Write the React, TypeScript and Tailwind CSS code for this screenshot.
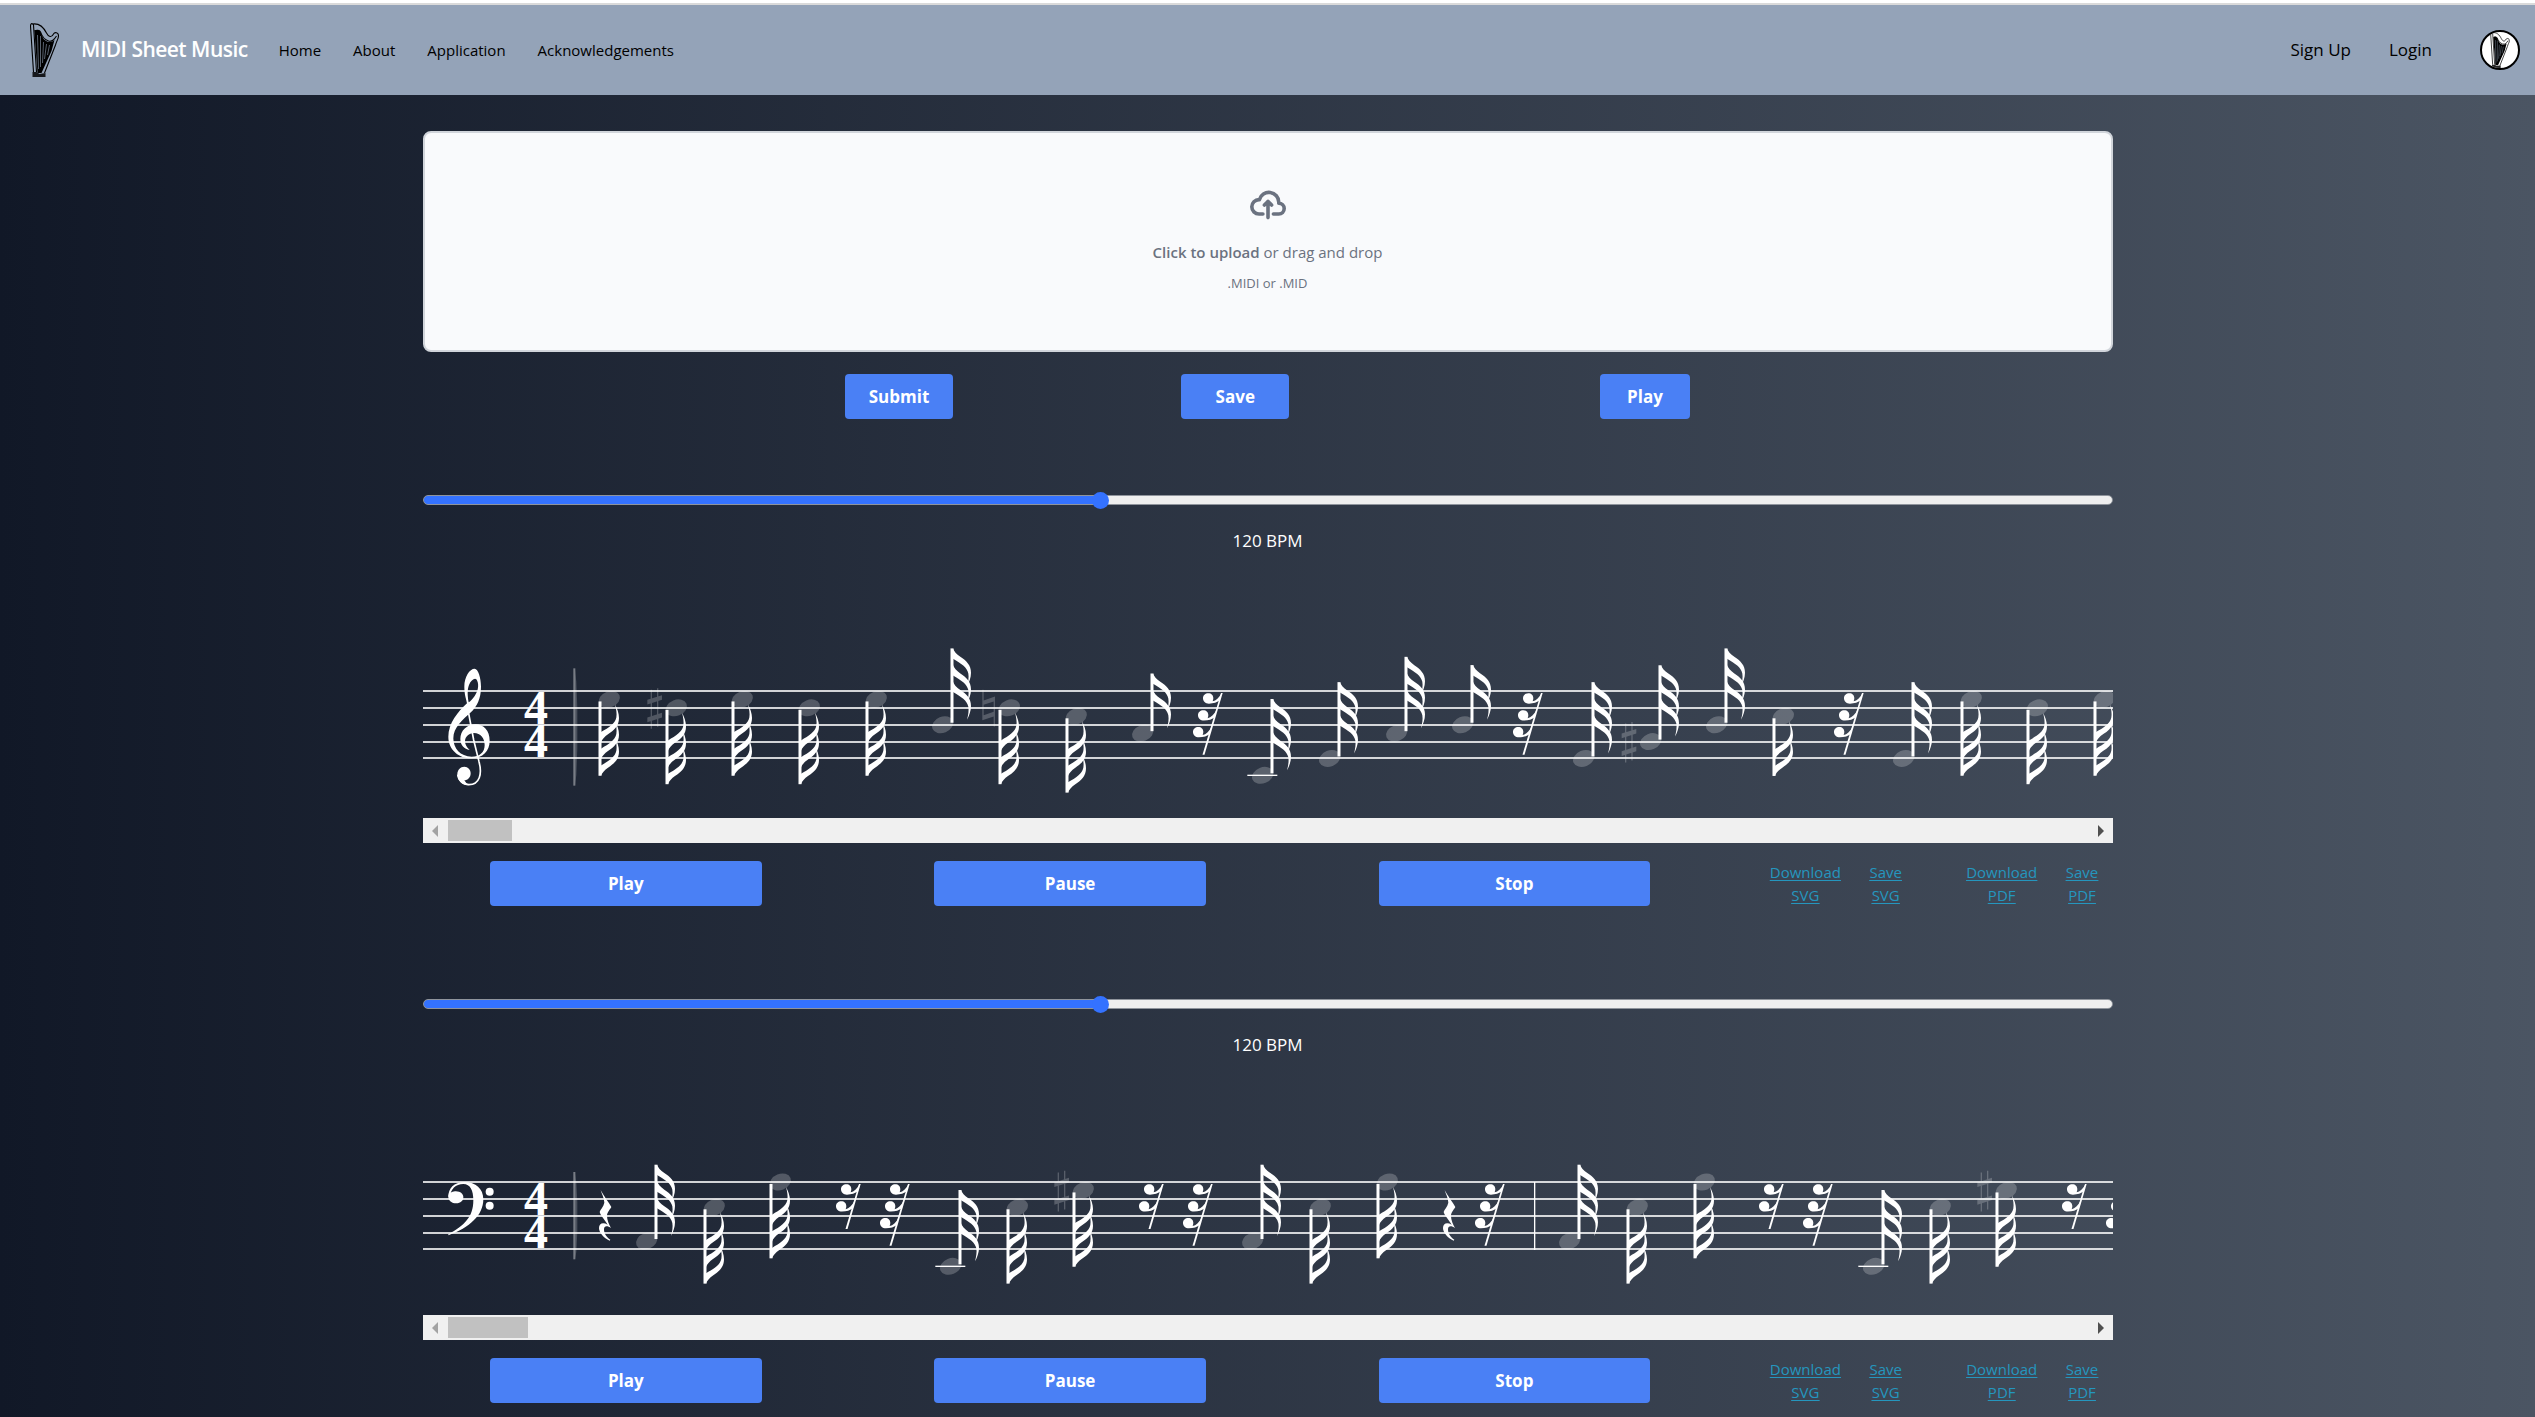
import { useState } from "react";

type Note = {
  kind: "up" | "down";
  x: number;
  pos: number;
  flags: number;
  accidental?: "sharp" | "natural";
  ledger?: boolean;
};
type Rest = { kind: "rest"; x: number; hooks: number };
type Quarter = { kind: "quarter"; x: number };
type Bar = { kind: "bar"; x: number };
type Mark = Note | Rest | Quarter | Bar;

const up = (x: number, pos: number, flags = 3, extra: Partial<Note> = {}): Note => ({ kind: "up", x, pos, flags, ...extra });
const down = (x: number, pos: number, flags = 3, extra: Partial<Note> = {}): Note => ({ kind: "down", x, pos, flags, ...extra });
const rest = (x: number, hooks = 3): Rest => ({ kind: "rest", x, hooks });

const TREBLE: Mark[] = [
  down(177, 1),
  down(244, 2, 3, { accidental: "sharp" }),
  down(310, 1),
  down(377, 2),
  down(444, 1),
  up(529, 4),
  down(577, 2, 3, { accidental: "natural" }),
  down(644, 3),
  up(729, 5, 2),
  rest(799),
  up(849, 10, 3, { ledger: true }),
  up(916, 8),
  up(983, 5),
  up(1049, 4, 2),
  rest(1119),
  up(1170, 8),
  up(1237, 6, 3, { accidental: "sharp" }),
  up(1303, 4),
  down(1351, 3, 2),
  rest(1440),
  up(1490, 8),
  down(1539, 1),
  down(1605, 2),
  down(1672, 1),
];

const BASS: Mark[] = [
  { kind: "quarter", x: 176 },
  up(233, 7),
  down(282, 3),
  down(348, 0),
  rest(437, 2),
  rest(486),
  up(537, 10, 3, { ledger: true }),
  down(585, 3),
  down(651, 1, 3, { accidental: "sharp" }),
  rest(740, 2),
  rest(789),
  up(839, 7),
  down(888, 3),
  down(955, 0),
  { kind: "quarter", x: 1020 },
  rest(1081),
  { kind: "bar", x: 1111 },
  up(1156, 7),
  down(1205, 3),
  down(1272, 0),
  rest(1360, 2),
  rest(1409),
  up(1460, 10, 3, { ledger: true }),
  down(1508, 3),
  down(1574, 1, 3, { accidental: "sharp" }),
  rest(1663, 2),
  rest(1712),
];

/* Glyphs are drawn on a grid of three units to the pixel. */
const HALF_SPACE = 25.3;

function Accidental({ type }: { type: "sharp" | "natural" }) {
  if (type === "sharp") {
    return (
      <g opacity="0.22">
        <path d="M-77 -54h4V63h-4ZM-58 -59h4V57h-4ZM-87 -24L-43 -38V-24L-87 -10ZM-87 29L-43 15V29L-87 43Z" />
      </g>
    );
  }
  return (
    <path
      opacity="0.22"
      d="M-81 -54h4V-22L-43 -34V56h-4V26L-81 37ZM-77 -9V22L-47 12V-19Z"
      fillRule="evenodd"
    />
  );
}

function NoteGlyph({ note }: { note: Note }) {
  const dir = note.kind === "up" ? -1 : 1;
  const length = 79 + note.flags * 50;
  const flags = Array.from({ length: note.flags }, (_, i) => length - i * 50);
  return (
    <g transform={`translate(${note.x * 3} ${note.pos * HALF_SPACE})`}>
      <ellipse cx={28 * dir} rx="33" ry="24" transform={`rotate(-22 ${28 * dir} 0)`} opacity="0.22" />
      {note.accidental && (
        <g transform={`translate(${28 * dir} 0)`}>
          <Accidental type={note.accidental} />
        </g>
      )}
      {note.ledger && <rect x="-74" y="-2" width="90" height="4" />}
      <g transform={`scale(1 ${dir})`}>
        <rect x="-4.5" y="6" width="9" height={length - 6} />
        {flags.map((y) => (
          <path
            key={y}
            transform={`translate(4 ${y})`}
            d="M-1 0C2 -8 9 -17 21 -25C39 -37 53 -50 53 -73C53 -88 47 -103 41 -114C45 -100 47 -86 45 -75C41 -56 24 -46 -1 -31Z"
          />
        ))}
      </g>
    </g>
  );
}

function RestGlyph({ x, hooks }: { x: number; hooks: number }) {
  const end = 35 + hooks * 50;
  return (
    <g transform={`translate(${x * 3} 6)`}>
      <path d={`M-3 0L2 0L${-0.3 * end + 3} ${end}L${-0.3 * end - 3} ${end}Z`} />
      {Array.from({ length: hooks }, (_, i) => (
        <path
          key={i}
          transform={`translate(${-15 * i} ${50.5 * i})`}
          d="M-57 16C-57 7 -50 1 -41 1C-32 1 -26 7 -26 16C-26 19 -27 22 -28 25C-18 23 -9 14 -1 0L-6 22C-14 28 -26 32 -39 32C-50 32 -57 25 -57 16Z"
        />
      ))}
    </g>
  );
}

function MarkGlyph({ mark }: { mark: Mark }) {
  if (mark.kind === "rest") return <RestGlyph x={mark.x} hooks={mark.hooks} />;
  if (mark.kind === "quarter") {
    return (
      <path
        transform={`translate(${mark.x * 3} 24)`}
        d="M5 0C14 18 30 38 37 51C34 58 24 66 24 78C24 90 30 104 36 114C26 107 15 106 15 118C15 130 22 142 34 149L32 152C14 144 0 128 0 114C0 100 12 96 26 104C18 90 4 76 2 66C4 58 14 50 16 38C16 24 8 12 5 0Z"
      />
    );
  }
  if (mark.kind === "bar") return <rect x={mark.x * 3} width="4" height="204" />;
  return <NoteGlyph note={mark} />;
}

function TrebleClef() {
  return (
    <g transform="translate(0 -153)">
      <path
        fillRule="evenodd"
        d="M155 86C140 86 124 110 124 140C124 165 130 178 132 190C105 215 76 250 76 290C76 330 108 355 145 355C180 355 200 332 200 302C200 272 182 253 158 253C132 253 112 272 112 297C112 315 124 328 140 330C130 322 126 312 126 304C126 290 138 279 153 279C173 279 185 295 185 315C185 337 170 350 146 350C112 350 91 325 91 295C91 262 118 240 142 218C162 200 174 175 174 140C174 112 165 86 155 86ZM137 187C134 170 132 150 138 135C144 120 155 113 160 118C168 128 168 150 155 168C148 178 142 184 137 187Z"
      />
      <path d="M137 220L152 300L168 365C178 402 170 434 138 434C118 434 106 420 104 404" fill="none" stroke="white" strokeWidth="5" />
      <path d="M103 403C103 390 112 380 124 380C135 380 143 389 143 400C143 413 134 421 124 421C128 428 133 433 138 436C116 436 103 420 103 403Z" />
    </g>
  );
}

function BassClef() {
  return (
    <g>
      <path d="M76 160C140 137 181 100 181 52C181 20 158 0 125 0C92 0 76 20 76 44L82 44C82 22 98 6 121 6C142 6 151 25 151 55C151 105 125 130 76 157Z" />
      <path d="M76 44C76 32 86 30 96 28C112 27 121 36 121 46C121 57 112 64 100 64C86 64 76 56 76 44Z" />
      <circle cx="200" cy="29" r="12" />
      <circle cx="200" cy="71" r="12" />
    </g>
  );
}

function Sheet({ clef, marks }: { clef: "treble" | "bass"; marks: Mark[] }) {
  const treble = clef === "treble";
  return (
    <svg
      role="img"
      aria-label={treble ? "Treble clef sheet music" : "Bass clef sheet music"}
      className={treble ? "block h-[264px] w-full fill-white" : "block h-[257px] w-full fill-white"}
    >
      <g transform={treble ? "translate(0 136)" : "translate(0 123)"}>
        {[0, 17, 34, 51, 67].map((y) => (
          <rect key={y} y={y} width="100%" height="2" opacity="0.8" />
        ))}
        <g className="text-[48px] font-bold [font-family:'Liberation_Serif',serif]">
          <text x="101" y="34">4</text>
          <text x="101" y="67">4</text>
        </g>
        <g transform="scale(0.33333) translate(0 3)">
          {treble ? <TrebleClef /> : <BassClef />}
          <g transform={treble ? "translate(451 -68)" : "translate(451 -30)"} opacity="0.4">
            <rect width="6" height={treble ? 352 : 262} />
            <path d={treble ? "M5 5L9 40L12 120V240L9 320L5 350Z" : "M5 4L9 30L12 90V180L9 240L5 260Z"} opacity="0.5" />
          </g>
          {marks.map((m) => (
            <MarkGlyph key={m.x} mark={m} />
          ))}
        </g>
      </g>
    </svg>
  );
}

function ScrollStrip({ thumb }: { thumb: string }) {
  return (
    <div className="flex h-[25px] items-center bg-[#f0f0f0]">
      <button type="button" aria-label="Scroll left" className="flex w-[25px] shrink-0 justify-center">
        <svg width="6" height="12" viewBox="0 0 6 12" className="fill-[#a3a3a3]">
          <path d="M6 0V12L0 6Z" />
        </svg>
      </button>
      <div className="flex-1">
        <div className={thumb} />
      </div>
      <button type="button" aria-label="Scroll right" className="flex w-6 shrink-0 justify-center">
        <svg width="6" height="12" viewBox="0 0 6 12" className="fill-[#505050]">
          <path d="M0 0V12L6 6Z" />
        </svg>
      </button>
    </div>
  );
}

function Harp({ className }: { className: string }) {
  return (
    <svg viewBox="0 0 30 54" className={className} aria-hidden="true">
      <path d="M5 9C5 7 9 6 11 9C13 15 15 18 19 19C22 19 24 18 25 17L22 28L12 50H8Z" fill="black" />
      <path d="M8 12L9 46M11 13V44M14 19L13 40M17 21L15 36M20 22L18 32" stroke="#94a3b8" strokeWidth="0.6" fill="none" />
      <path
        d="M4 49L1 3C1 0 3 0 4 2L7 49M3 1C10 0 14 4 17 10C19 14 22 15 24 11C25 9 29 9 29 13C29 16 27 18 26 22L15 50M27 13C25 16 23 19 19 18C15 17 12 12 11 9C10 7 7 7 5 8"
        fill="none"
        stroke="black"
        strokeWidth="1.1"
      />
      <path d="M3 49H7L10 51L16 50V54H3Z" fill="black" opacity="0.85" />
    </svg>
  );
}

function Tempo({ id }: { id: string }) {
  const [bpm, setBpm] = useState(120);
  const share = `${((bpm - 40) / 200) * 100}%`;
  return (
    <div className="flex flex-col items-center">
      <input
        id={id}
        type="range"
        min={40}
        max={240}
        value={bpm}
        onChange={(e) => setBpm(Number(e.target.value))}
        style={{ backgroundImage: `linear-gradient(to right, #3472ff ${share}, #efefef ${share})` }}
        className="h-2.5 w-full appearance-none rounded-full border border-[#8f949c] bg-origin-border [&::-webkit-slider-thumb]:size-[17px] [&::-webkit-slider-thumb]:appearance-none [&::-webkit-slider-thumb]:rounded-full [&::-webkit-slider-thumb]:bg-[#3472ff]"
      />
      <label htmlFor={id} className="mt-[22px] text-[17px] leading-[27px] text-white">
        {bpm} BPM
      </label>
    </div>
  );
}

const BUTTON = "h-[45px] rounded bg-[#4a80f5] text-[17px] font-bold text-white";

function Links({ format }: { format: string }) {
  return (
    <div className="flex w-[45%] justify-around text-center text-[15px] leading-[23px] text-[#2596be] underline underline-offset-2">
      <a href={`#download-${format}`}>
        Download
        <br />
        {format}
      </a>
      <a href={`#save-${format}`}>
        Save
        <br />
        {format}
      </a>
    </div>
  );
}

function Controls() {
  return (
    <div className="mt-[18px] flex justify-between pl-[4%]">
      <div className="flex w-[71.5%] justify-between">
        <button type="button" className={`w-[23.4%] ${BUTTON}`}>Play</button>
        <button type="button" className={`w-[23.4%] ${BUTTON}`}>Pause</button>
        <button type="button" className={`w-[23.4%] ${BUTTON}`}>Stop</button>
      </div>
      <div className="flex w-[22%] justify-between">
        <Links format="SVG" />
        <Links format="PDF" />
      </div>
    </div>
  );
}

export default function App() {
  return (
    <div className="min-h-screen border-t-[3px] border-white bg-[linear-gradient(to_right,#111827,#4b5563)] [font-family:'Open_Sans',sans-serif]">
      <header className="flex h-[92px] items-center border-t-2 border-[#dadada] bg-[#94a3b8] pr-[15px] pl-[29px]">
        <Harp className="h-[54px] w-[31px]" />
        <span className="ml-[21px] text-[21px] font-semibold tracking-tight text-white">MIDI Sheet Music</span>
        <nav className="ml-[31px] flex gap-8 text-[15px] text-black">
          <a href="#home">Home</a>
          <a href="#about">About</a>
          <a href="#application">Application</a>
          <a href="#acknowledgements">Acknowledgements</a>
        </nav>
        <div className="ml-auto flex items-center text-[17px] text-black">
          <a href="#signup">Sign Up</a>
          <a href="#login" className="ml-[38px]">Login</a>
          <button type="button" aria-label="Account" className="ml-12 flex size-10 items-center justify-center overflow-hidden rounded-full border-2 border-black bg-white">
            <Harp className="h-9 w-5" />
          </button>
        </div>
      </header>

      <main className="mx-auto mt-9 w-2/3 pb-3">
        <label
          htmlFor="midi-file"
          className="flex h-[221px] cursor-pointer flex-col items-center justify-center rounded-lg border-2 border-[#d1d5db] bg-[#f9fafc] pb-1 text-[#6b7280]"
        >
          <svg viewBox="0 0 20 16" fill="none" className="h-9 w-9" aria-hidden="true">
            <path
              stroke="currentColor"
              strokeLinecap="round"
              strokeLinejoin="round"
              strokeWidth="2"
              d="M13 13h3a3 3 0 0 0 0-6h-.025A5.56 5.56 0 0 0 16 6.5 5.5 5.5 0 0 0 5.207 5.021C5.137 5.017 5.071 5 5 5a4 4 0 0 0 0 8h2.167M10 15V6m0 0L8 8m2-2 2 2"
            />
          </svg>
          <span className="mt-[18px] text-[15px] leading-[23px]">
            <span className="font-semibold">Click to upload</span> or drag and drop
          </span>
          <span className="mt-2.5 text-[13px] leading-[18px]">.MIDI or .MID</span>
          <input id="midi-file" type="file" accept=".mid,.midi" className="sr-only" />
        </label>

        <div className="mx-auto mt-[22px] grid w-1/2 grid-cols-[39.8%_1fr_auto]">
          <button type="button" className={`w-[108px] ${BUTTON}`}>Submit</button>
          <button type="button" className={`w-[108px] ${BUTTON}`}>Save</button>
          <button type="button" className={`w-[90px] ${BUTTON}`}>Play</button>
        </div>

        <section className="mt-[76px]">
          <Tempo id="tempo-treble" />
          <Sheet clef="treble" marks={TREBLE} />
          <ScrollStrip thumb="h-[21px] w-16 bg-[#c1c1c1]" />
          <Controls />
        </section>

        <section className="mt-[92px]">
          <Tempo id="tempo-bass" />
          <Sheet clef="bass" marks={BASS} />
          <ScrollStrip thumb="h-[21px] w-20 bg-[#c1c1c1]" />
          <Controls />
        </section>
      </main>
    </div>
  );
}
